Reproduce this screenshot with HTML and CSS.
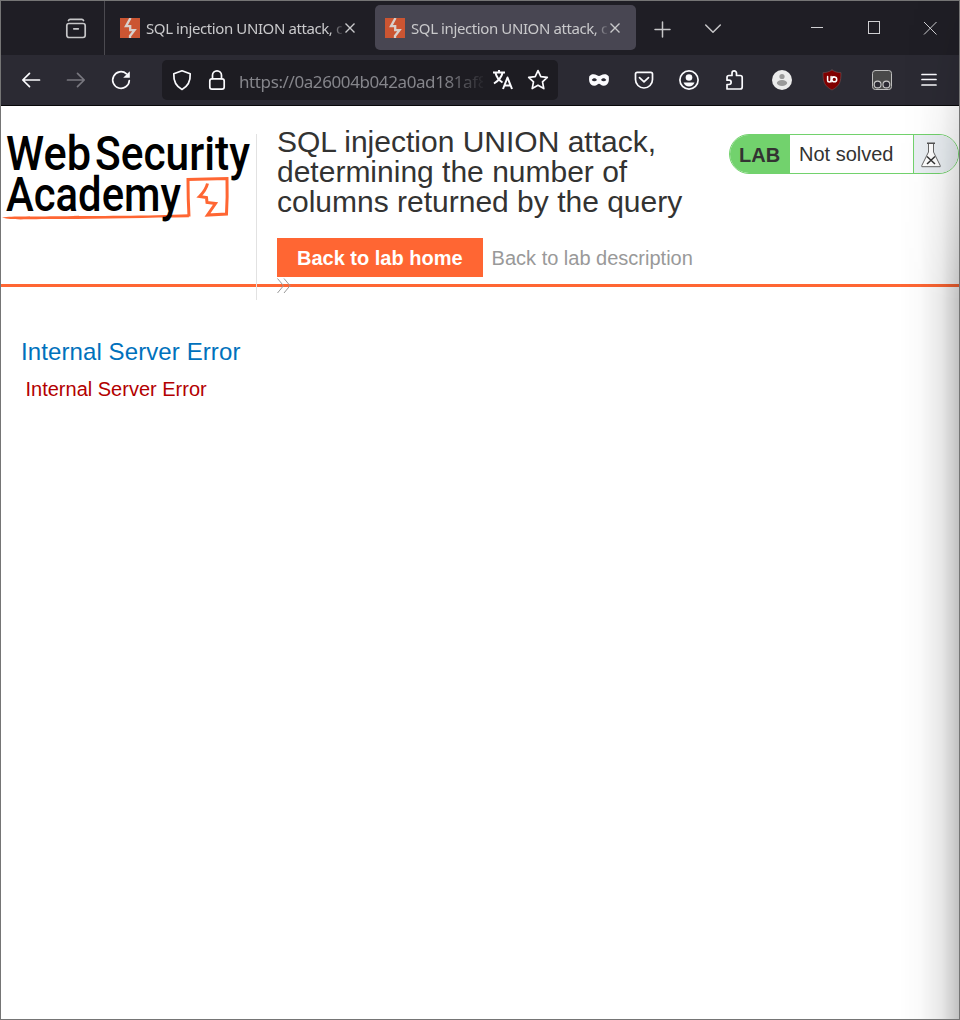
FILE: index.html
```html
<!DOCTYPE html>
<html lang="en">
<head>
<meta charset="utf-8">
<title>SQL injection UNION attack</title>
<link rel="stylesheet" href="styles.css">
</head>
<body>
<div class="window">
  <div class="tabbar">
    <div class="tabview">
      <svg class="ic" viewBox="0 0 24 24"><path d="M4.500 4.500c.4-1 1-1.200 1.600-1.200h11.800c.6 0 1.200.2 1.600 1.200"/><rect x="2.800" y="7.500" width="18.400" height="14" rx="2.200"/><path d="M9.800 12.800h4.500"/></svg>
    </div>
    <div class="tab">
      <svg class="fav" viewBox="0 0 20 20"><rect width="20" height="20" fill="#cb5532"/><path d="M10.500 0 6 8.200h4.200v4h4.300L10 18v2" fill="none" stroke="#d8d0cc" stroke-width="2.300"/></svg>
      <span class="tab-title">SQL injection UNION attack, c</span>
      <svg class="x" viewBox="0 0 12 12"><path d="M1.500 1.500l9 9m0-9l-9 9"/></svg>
    </div>
    <div class="tab active">
      <svg class="fav" viewBox="0 0 20 20"><rect width="20" height="20" fill="#cb5532"/><path d="M10.500 0 6 8.200h4.200v4h4.300L10 18v2" fill="none" stroke="#d8d0cc" stroke-width="2.300"/></svg>
      <span class="tab-title">SQL injection UNION attack, c</span>
      <svg class="x" viewBox="0 0 12 12"><path d="M1.500 1.500l9 9m0-9l-9 9"/></svg>
    </div>
    <svg class="ic plus" viewBox="0 0 24 24"><path d="M12.500 5v15M5 12.500h15"/></svg>
    <svg class="ic caret" viewBox="0 0 24 24"><path d="M4.700 8l7.300 7.200L19.300 8"/></svg>
    <svg class="ic thin min" viewBox="0 0 24 24"><path d="M6 11.500h12"/></svg>
    <svg class="ic thin max" viewBox="0 0 24 24"><rect x="6.500" y="6.500" width="11" height="12"/></svg>
    <svg class="ic thin close" viewBox="0 0 24 24"><path d="M6 6l12.500 12.500m0-12.500L6 18.500"/></svg>
  </div>
  <div class="toolbar">
    <svg class="ic" viewBox="0 0 24 24"><path d="M20.500 12H4m6.500-6.700L3.800 12l6.700 6.700"/></svg>
    <svg class="ic dim" viewBox="0 0 24 24"><path d="M3.500 12h16.500m-6.500-6.700 6.700 6.700-6.700 6.700"/></svg>
    <svg class="ic" viewBox="0 0 24 24"><path d="M20.300 12.500A8.300 8.300 0 1 1 17.500 5.800"/><path d="M20.800 3.200v6.600h-6.600z" fill="#fbfbfe" stroke="none"/></svg>
    <div class="urlbar">
      <svg class="ic" viewBox="0 0 24 24"><path d="M12 2.800l8.200 3c.3 6-2 12.500-8.200 15.600C5.800 18.300 3.500 11.800 3.800 5.800z"/></svg>
      <svg class="ic" viewBox="0 0 24 24"><rect x="4.800" y="10.800" width="14.400" height="10.400" rx="2.200"/><path d="M7.500 10.500V7.300a4.500 4.500 0 0 1 9 0v3.200"/></svg>
      <span class="url">https://0a26004b042a0ad181af8</span>
      <svg class="ic bold" viewBox="0 0 24 24"><path d="M2 4.500h12M8 2v2.500M4.500 5c1 4 4.500 8 7 9.500M11.500 5c-1 4.500-4.500 8-8.500 10.500"/><path d="M12 21l4.500-11.500L21 21m-7.700-3.500h6.400"/></svg>
      <svg class="ic" viewBox="0 0 24 24"><path d="M12 2.600l2.800 6 6.500.8-4.800 4.500 1.300 6.700L12 17.300l-5.800 3.300 1.300-6.700L2.700 9.400l6.500-.8z"/></svg>
    </div>
    <svg class="ic mask" viewBox="0 0 24 24"><path d="M2.300 8.200C4 5.800 7.500 5.600 10 7.300c1.300.8 2.700.8 4 0 2.500-1.700 6-1.500 7.700.9.700 4.500 0 9.300-5 9.500-2.500 0-3.500-2-4.700-2s-2.200 2-4.700 2c-5-.2-5.700-5-5-9.500z" fill="#fbfbfe" stroke="none"/><path d="M4.700 12c1.500-2.300 4-2.300 5.300 0-1.500 1.700-3.800 1.700-5.300 0zm9.300 0c1.300-2.300 3.800-2.300 5.300 0-1.500 1.700-3.800 1.700-5.300 0z" fill="#2b2a33" stroke="none"/></svg>
    <svg class="ic" viewBox="0 0 24 24"><path d="M5.200 4.300h13.600a1.700 1.700 0 0 1 1.700 1.700v5.500a8.500 8.500 0 0 1-17 0V6a1.700 1.700 0 0 1 1.700-1.700z"/><path d="M7.500 9.700l4.500 4.200 4.500-4.200"/></svg>
    <svg class="ic" viewBox="0 0 24 24"><circle cx="12" cy="12" r="9.100"/><circle cx="12" cy="9.500" r="3.300" fill="#fbfbfe" stroke="none"/><path d="M6.500 14.500h11c-1 2.500-3 4-5.500 4s-4.500-1.500-5.500-4z" fill="#fbfbfe" stroke="none"/></svg>
    <svg class="ic" viewBox="0 0 24 24"><path d="M5 21h13.200a2 2 0 0 0 2-2V9.500a2 2 0 0 0-2-2h-3.700V5.200a2.200 2.200 0 0 0-4.500 0v2.300H7a2 2 0 0 0-2 2v2.700h2a2 2 0 0 1 0 4.300H5z"/></svg>
    <svg class="ic avatar" viewBox="0 0 24 24"><circle cx="12" cy="12" r="10" fill="#ebebeb" stroke="none"/><circle cx="12" cy="8.500" r="2.600" fill="#999" stroke="none"/><ellipse cx="12" cy="15" rx="5.200" ry="2.900" fill="#999" stroke="none"/></svg>
    <svg class="ic ublock" viewBox="0 0 24 24"><path d="M12 2c3 2 6 2.700 9 2.700 0 9-1 13-9 17.300C4 17.700 3 13.700 3 4.700 6 4.700 9 4 12 2z" fill="#800000" stroke="#6b5458" stroke-width=".6"/><path d="M7.600 8.500v3.700a1.700 1.700 0 0 0 3.500 0V8.500" stroke="#fff" stroke-width="1.500"/><path d="M11.100 12.500v1.400M12.500 8.800h1.700" stroke="#fff" stroke-width="1.300"/><circle cx="14.300" cy="11.400" r="2.400" stroke="#fff" stroke-width="1.500"/></svg>
    <svg class="ic tamper" viewBox="0 0 24 24"><rect x="2.500" y="2.500" width="19" height="19" rx="2.800" fill="#4a4a4a" stroke="#bdbdbd" stroke-width="1"/><g fill="#2b2a33" stroke="#c8c8c8" stroke-width="1.100"><circle cx="7.600" cy="16.500" r="3.400"/><circle cx="16.400" cy="16.500" r="3.400"/></g></svg>
    <svg class="ic menu" viewBox="0 0 24 24"><path d="M5 6.500h14m-14 5h14m-14 5.500h14"/></svg>
  </div>
  <div class="page">
    <header class="lab-header">
      <svg class="logo" viewBox="0 0 255 100">
        <path d="M1 88.500C12 87 30 87.700 60 87.300S150 87 187.500 85.300l.5 3C150 88.500 100 90 60 90S12 91.500 1 88.500z" fill="#ff6633"/>
        <path d="M188 87.500Q187 70 187 50.500L226 49.500Q226.500 68 225.500 85L206.500 86 214.500 74.500 206 73.500 205.500 68.500 198.500 67.500Q205 61 206.500 54.500" fill="none" stroke="#ff6633" stroke-width="3"/>
        <g font-family="Roboto, sans-serif" font-weight="500" font-size="48.500" fill="#000">
          <text x="5" y="41.300" textLength="85" lengthAdjust="spacingAndGlyphs">Web</text>
          <text x="94" y="41.300" textLength="155" lengthAdjust="spacingAndGlyphs">Security</text>
          <text x="5" y="82" textLength="175" lengthAdjust="spacingAndGlyphs">Academy</text>
        </g>
      </svg>
      <div class="title">
        <h2>SQL injection UNION attack, determining the number of columns returned by the query</h2>
        <div class="links">
          <a class="home">Back to lab home</a>
          <a class="desc">Back to lab description</a>
        </div>
        <svg class="chev" viewBox="0 0 14 16"><path d="M.5.500l6 7.200-6 7.300m6.500-14.500l6 7.200-6 7.300" fill="none" stroke="#999"/></svg>
      </div>
      <div class="status">
        <span class="lab">LAB</span>
        <p>Not solved</p>
        <span class="flask"><svg viewBox="0 0 20 26"><path d="M7.500 1.500v8.500L.8 23.500v1.200h18.400v-1.200L12.500 10V1.500" fill="#fff" stroke="#666"/><path d="M6 1.200h8" stroke="#555" stroke-width="1.400"/><path d="M6 14.500l8 7.500m0-7.500L6 22" stroke="#333" stroke-width="1.500"/></svg></span>
      </div>
    </header>
    <main>
      <h4>Internal Server Error</h4>
      <p class="warning">Internal Server Error</p>
    </main>
  </div>
  <div class="edge-shade"></div>
</div>
</body>
</html>
```
FILE: styles.css
```css
* { box-sizing: border-box; }
body { margin: 0; font-family: "Liberation Sans", Arial, sans-serif; }
h2, h4, p { margin: 0; font-weight: 400; }
svg { display: block; flex: none; }

.window {
  position: relative;
  width: 960px;
  height: 1020px;
  border: 1px solid #757575;
  background: #fff;
  overflow: hidden;
}

.ic {
  width: 24px;
  height: 24px;
  fill: none;
  stroke: #fbfbfe;
  stroke-width: 1.7;
  stroke-linecap: round;
  stroke-linejoin: round;
}
.dim { stroke: #78777f; }
.bold { stroke-width: 2; stroke-linecap: butt; }
.thin { stroke: #cfcfd2; stroke-width: 1; stroke-linecap: butt; stroke-linejoin: miter; }

.tabbar {
  display: flex;
  align-items: center;
  height: 54px;
  background: #1f1e25;
}
.tabview {
  width: 104px;
  height: 54px;
  padding: 15px 0 0 63px;
  border-right: 1px solid #4b4a50;
}
.tabview .ic { stroke: #c6c6c8; }
.tab {
  display: flex;
  align-items: center;
  width: 262px;
  height: 45px;
  margin-left: 4px;
  margin-bottom: 1px;
  padding-left: 11px;
  border-radius: 5px;
}
.tab.active { width: 261px; margin-left: 4px; padding-left: 10px; background: #484652; }
.fav { width: 20px; height: 20px; margin-top: 1px; }
.tab-title {
  width: 196px;
  margin: 1px 1px 0 6px;
  white-space: nowrap;
  font: 15px/24px "Noto Sans", sans-serif;
  letter-spacing: -0.4px;
  color: #c9c9cb;
  -webkit-mask-image: linear-gradient(90deg, #000 184px, transparent 198px);
  mask-image: linear-gradient(90deg, #000 184px, transparent 198px);
}
.x { width: 12px; height: 12px; margin: 1px 0 0 1px; fill: none; stroke: #c9c9cb; stroke-width: 1.4; }
.plus { margin-left: 14px; margin-top: 1px; stroke: #c6c6c8; stroke-width: 1.5; }
.caret { margin-left: 27px; margin-top: 1px; stroke: #c6c6c8; stroke-width: 1.5; }
.min { margin-left: 80px; margin-bottom: 1px; }
.max { margin-left: 33px; margin-bottom: 2px; }
.close { margin-left: 32px; margin-bottom: 1px; }

.toolbar {
  display: flex;
  align-items: center;
  gap: 21px;
  height: 51px;
  padding-left: 18px;
  border-bottom: 1px solid #08080a;
  background: #2b2a33;
}
.urlbar {
  display: flex;
  align-items: center;
  gap: 11px;
  width: 396px;
  height: 40px;
  margin: 0 8px;
  padding: 0 8px;
  border-radius: 5px;
  background: #1d1c22;
}
.url {
  width: 244px;
  margin: 3px -3px 0 -1px;
  white-space: nowrap;
  font: 17px/26px "Noto Sans", sans-serif;
  letter-spacing: -0.4px;
  color: #85858b;
  -webkit-mask-image: linear-gradient(90deg, #000 205px, transparent 248px);
  mask-image: linear-gradient(90deg, #000 205px, transparent 248px);
}
.avatar { margin-left: 3px; }
.ublock, .tamper { margin-left: 5px; }
.menu { margin-left: 2px; }

.page { color: #333332; }
.lab-header {
  display: flex;
  align-items: flex-start;
  height: 181px;
  border-bottom: 3px solid #ff6633;
}
.logo { width: 255px; height: 100px; margin-top: 23px; }
.title {
  width: 431px;
  height: 166px;
  margin-top: 28px;
  padding-left: 20px;
  border-left: 1px solid #e2e2e2;
}
h2 { margin-top: -7px; font-size: 30px; line-height: 30px; }
.links { display: flex; gap: 9px; height: 39px; margin-top: 21px; font-size: 20px; line-height: 41px; white-space: nowrap; }
.home { width: 206px; padding: 0 20px; background: #ff6633; color: #fff; font-weight: 700; }
.desc { color: #999; }
.chev { width: 14px; height: 16px; margin-top: 1px; }
.status {
  display: flex;
  width: 230px;
  height: 40px;
  margin: 28px 0 0 42px;
  border: 1px solid #72d26d;
  border-radius: 20px;
  overflow: hidden;
  font-size: 20px;
  line-height: 38px;
}
.lab { width: 60px; padding-left: 9px; background: #72d26d; font-weight: 700; line-height: 40px; }
.status p { width: 123px; padding-left: 9px; }
.flask { flex: 1; padding: 7px 0 0 7px; border-left: 1px solid #72d26d; background: #e9eef2; }
.flask svg { width: 20px; height: 26px; }

main { padding: 50px 20px; }
h4 { font-size: 24px; line-height: 30px; letter-spacing: 0.1px; color: #0071bc; }
.warning { margin-top: 9px; padding-left: 4.5px; font-size: 20px; line-height: 26px; color: #b30000; }

/* soft shadow falling across the right side of the window */
.edge-shade {
  position: absolute;
  inset: 0 0 0 auto;
  width: 60px;
  background: linear-gradient(90deg, rgba(0,0,0,0), rgba(0,0,0,.02) 35%, rgba(0,0,0,.09) 70%, rgba(0,0,0,.24));
  -webkit-mask-image: linear-gradient(rgba(0,0,0,.1), rgba(0,0,0,.4) 110px, #000 300px);
  mask-image: linear-gradient(rgba(0,0,0,.1), rgba(0,0,0,.4) 110px, #000 300px);
}
```
